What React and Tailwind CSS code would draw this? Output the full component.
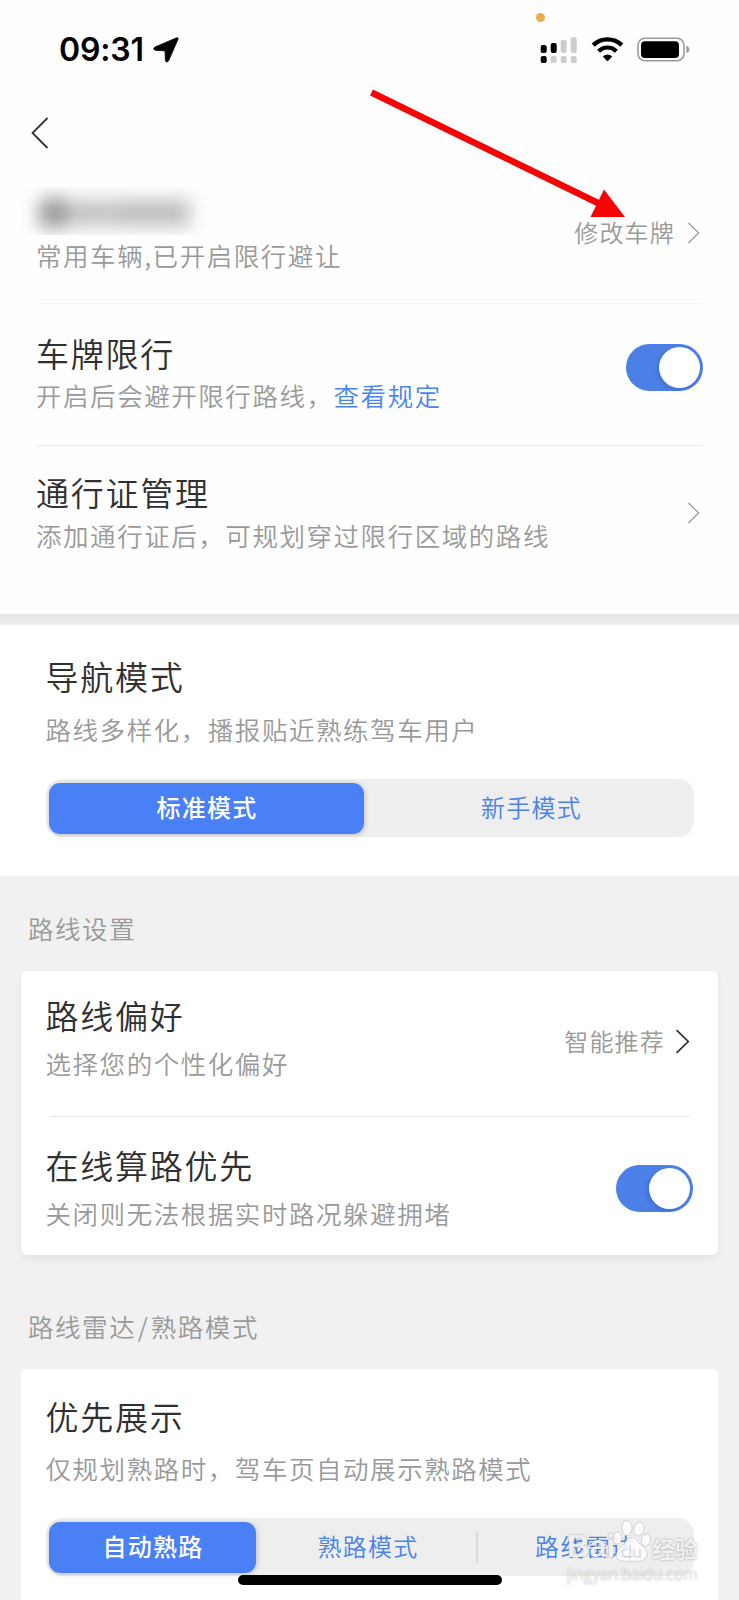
const TITLE = "text-[33px] leading-[40px] tracking-[1.75px] text-[#303030]";
const SUB = "text-[25.5px] leading-[32px] tracking-[1.55px] text-[#999]";
const SMALL = "text-[24px] leading-[32px] tracking-[1.2px]";

function Toggle({ className = "" }) {
  return (
    <div className={`flex h-[47px] w-[77px] items-center justify-end rounded-full bg-[#4c80e6] pr-[3px] ${className}`}>
      <div className="size-[41px] rounded-full bg-white shadow-[-2px_2px_4px_rgba(20,50,130,0.22)]" />
    </div>
  );
}

function Chevron({ className, width, height, stroke }) {
  return (
    <svg className={`shrink-0 ${className}`} width={width} height={height} viewBox="0 0 12 22" fill="none" preserveAspectRatio="none">
      <path d="M0.5 1 L10.5 11 L0.5 21" stroke="currentColor" strokeWidth={stroke} />
    </svg>
  );
}

function StatusBar() {
  return (
    <header className="relative flex h-[98px] items-center justify-between pl-[59px] pr-[49px] pt-[2px]">
      <div className="flex items-center">
        <span className="w-[85px] font-['Inter',sans-serif] text-[32px] font-semibold leading-[40px] tracking-[-0.15px] text-black">09:31</span>
        <svg className="-mt-px ml-[9px]" width="26" height="26" viewBox="0 0 26 26">
          <path d="M25 2.2 Q25.6 0.2 23.4 0.9 L2 10 Q-1 11.7 2 13.2 L11 13.8 Q12 13.9 12.1 14.8 L12.4 23.6 Q13.4 26.6 15.6 23.8 Z" fill="#000" stroke="#000" strokeWidth="0.8" />
        </svg>
      </div>
      <div className="-mt-px flex items-center">
        <svg width="38" height="28" viewBox="0 0 38 28">
          <rect x="0.7" y="9" width="6" height="8" rx="2" fill="#000" />
          <rect x="10.7" y="7" width="6" height="10" rx="2" fill="#000" />
          <rect x="20.7" y="4" width="6" height="13" rx="2" fill="#ccc" />
          <rect x="30.7" y="1" width="6" height="16" rx="2" fill="#ccc" />
          <rect x="0.7" y="20" width="6" height="7" rx="2" fill="#000" />
          <rect x="10.7" y="20" width="6" height="7" rx="2" fill="#ccc" />
          <rect x="20.7" y="20" width="6" height="7" rx="2" fill="#ccc" />
          <rect x="30.7" y="20" width="6" height="7" rx="2" fill="#ccc" />
        </svg>
        <svg className="ml-[13px]" width="33" height="25" viewBox="0 0 33 25">
          <path d="M2.2 8.2 A20.5 20.5 0 0 1 30.8 8.2" fill="none" stroke="#000" strokeWidth="4.4" />
          <path d="M7.6 14.2 A12.6 12.6 0 0 1 25.4 14.2" fill="none" stroke="#000" strokeWidth="4.2" />
          <path d="M11.8 19.4 Q16.5 15.6 21.2 19.4 L17.2 23.8 Q16.5 24.4 15.8 23.8 Z" fill="#000" />
        </svg>
        <svg className="ml-[13px]" width="53" height="26" viewBox="0 0 53 26">
          <rect x="1" y="1.2" width="46" height="22.6" rx="7" fill="none" stroke="#999" strokeWidth="1.6" />
          <rect x="4" y="4.2" width="38" height="16.8" rx="4" fill="#000" />
          <path d="M49.4 8.8 Q52.4 9.8 52.4 12.5 Q52.4 15.2 49.4 16.2 Z" fill="#999" />
        </svg>
      </div>
      <div className="absolute left-[536px] top-[13px] size-[9px] rounded-full bg-[#ecab4c]" />
    </header>
  );
}

function Segment({ children }) {
  return <div className="flex h-[58px] w-[648px] rounded-[16px] bg-[#eee] px-[3px] pt-[4px] text-[#4a82ea]">{children}</div>;
}

function Active({ children, className }) {
  return (
    <div className={`flex h-[51px] items-center justify-center rounded-[11px] bg-[#4a80f5] pb-[4px] pl-[2px] font-medium text-white shadow-[1px_1px_5px_rgba(0,0,0,0.2)] ${SMALL} ${className}`}>
      {children}
    </div>
  );
}

function Watermark() {
  return (
    <div className="absolute left-[567px] top-[1517px] h-[70px] w-[136px] text-white/85">
      <div className="flex h-[46px] items-end font-['Liberation_Sans',sans-serif] font-bold [text-shadow:0_0_2px_rgba(0,0,0,0.4)]">
        <span className="w-[45px] text-[31px] leading-[33px]">Bai</span>
        <svg width="40" height="44" viewBox="0 0 40 44">
          <g fill="currentColor" stroke="#000" strokeOpacity="0.14" strokeWidth="1">
            <ellipse cx="5.500" cy="19" rx="4.500" ry="6" />
            <ellipse cx="15" cy="9" rx="5" ry="7.500" />
            <ellipse cx="27" cy="10" rx="5" ry="7" transform="rotate(15 27 10)" />
            <ellipse cx="34" cy="21" rx="4.500" ry="6" transform="rotate(15 34 21)" />
            <path d="M19 19 Q24 18 27 24 Q36 30 35 37 Q33 44 20 42 Q6 44 4 37 Q4 31 11 26 Q15 19 19 19Z" />
          </g>
          <path d="M15 30 a4.500 4 0 1 0 0.100 8 h3 v-12 M22 30 v6 q0 2 3 2 h3 v-8" fill="none" stroke="#000" strokeOpacity="0.14" strokeWidth="1.500" />
        </svg>
        <span className="font-['Noto_Sans_CJK_SC',sans-serif] text-[23px] leading-[30px]">经验</span>
      </div>
      <div className="font-['Open_Sans',sans-serif] text-[15.500px] leading-[22px] tracking-[0.300px] [text-shadow:0_0_2px_rgba(0,0,0,0.45)]">jingyan.baidu.com</div>
    </div>
  );
}

export default function App() {
  return (
    <div className="relative h-[1600px] w-[739px] overflow-hidden bg-[#f1f1f1] font-['Noto_Sans_CJK_SC',sans-serif] font-[350] whitespace-nowrap">
      <div className="h-[614px] bg-[#fefefe]">
        <StatusBar />
        <nav className="h-[70px] pl-[31px] pt-[19px]">
          <svg width="18" height="32" viewBox="0 0 18 32" fill="none">
            <path d="M16.500 1 L1.500 16 L16.500 31" stroke="#333" strokeWidth="1.8" />
          </svg>
        </nav>
        <section className="flex h-[132px] justify-between border-b border-[#f9f9f9] pl-[36px] pr-[39px] pt-[19px]">
          <div>
            <div className="-ml-[20px] h-[48px] w-[220px] overflow-hidden">
              <div className="flex items-center gap-[1px] pl-[23px] pt-[11px] blur-[9px]">
                <div className="h-[30px] w-[29px] rounded-lg bg-[#969696]" />
                <div className="h-[26px] w-[45px] bg-[#c2c2c2]" />
                <div className="h-[26px] w-[75px] bg-[#bcbcbc]" />
              </div>
            </div>
            <div className={`mt-[4px] ${SUB}`}>常用车辆,已开启限行避让</div>
          </div>
          <div className="mt-[29px] flex h-[32px] items-center text-[#999]">
            <span className={SMALL}>修改车牌</span>
            <Chevron className="ml-[13px] mt-[2px]" width={12} height={22} stroke={1.2} />
          </div>
        </section>

        <section className="mx-[36px] mt-[3px] flex h-[143px] justify-between border-b border-t border-b-[#eee] border-t-[#f8f8f8]">
          <div className="pt-[29px]">
            <div className={TITLE}>车牌限行</div>
            <div className={`mt-[6px] ${SUB}`}>
              开启后会避开限行路线，<span className="text-[#4a85ea]">查看规定</span>
            </div>
          </div>
          <Toggle className="mt-[40px]" />
        </section>

        <section className="mx-[36px] flex justify-between pr-[3px]">
          <div className="pt-[26px]">
            <div className={TITLE}>通行证管理</div>
            <div className={`mt-[7px] ${SUB}`}>添加通行证后，可规划穿过限行区域的路线</div>
          </div>
          <Chevron className="mt-[56px] text-[#999]" width={12} height={22} stroke={1.2} />
        </section>
      </div>
      <div className="h-[11px] bg-linear-to-b from-[#e5e5e5] to-[#f0f0f0]" />

      <section className="h-[251px] bg-white pl-[45.5px] pt-[31px]">
        <div className={TITLE}>导航模式</div>
        <div className={`mt-[17px] ${SUB}`}>路线多样化，播报贴近熟练驾车用户</div>
        <div className="mt-[34px]">
          <Segment>
            <Active className="w-[315px]">标准模式</Active>
            <div className={`flex flex-1 items-center justify-center pb-[7px] pl-[9px] ${SMALL}`}>新手模式</div>
          </Segment>
        </div>
      </section>

      <div className={`pl-[28px] pt-[36px] ${SUB}`}>路线设置</div>
      <section className="mx-[21px] mt-[27px] h-[284px] rounded-[6px] bg-white pl-[24.5px] pr-[25px] shadow-[0_4px_8px_rgba(0,0,0,0.06)]">
        <div className="flex justify-between">
          <div className="pt-[24px]">
            <div className={TITLE}>路线偏好</div>
            <div className={`mt-[12px] ${SUB}`}>选择您的个性化偏好</div>
          </div>
          <div className="mt-[54px] flex h-[32px] items-center pr-[3px] text-[#999]">
            <span className={SMALL}>智能推荐</span>
            <Chevron className="ml-[11px] text-[#333]" width={14} height={25} stroke={1.5} />
          </div>
        </div>
        <div className="ml-[4px] mr-[3px] mt-[37px] h-px bg-[#e6e6e6]" />
        <div className="flex justify-between">
          <div className="pt-[28px]">
            <div className={TITLE}>在线算路优先</div>
            <div className={`mt-[12px] ${SUB}`}>关闭则无法根据实时路况躲避拥堵</div>
          </div>
          <Toggle className="mt-[48px]" />
        </div>
      </section>

      <div className={`pl-[28px] pt-[55px] ${SUB}`}>
        路线雷达<span className="px-[1.500px]">/</span>熟路模式
      </div>
      <section className="mx-[21px] mt-[27px] h-[260px] rounded-[6px] bg-white pl-[24.5px] pt-[27px]">
        <div className={TITLE}>优先展示</div>
        <div className={`mt-[16px] ${SUB}`}>仅规划熟路时，驾车页自动展示熟路模式</div>
        <div className="mt-[34px]">
          <Segment>
            <Active className="w-[207px]">自动熟路</Active>
            <div className={`flex w-[220px] items-center justify-center pb-[6px] pl-[5px] ${SMALL}`}>熟路模式</div>
            <div className="mt-[9px] h-[32px] w-[2px] bg-[#dcdcdc]" />
            <div className={`flex flex-1 items-center justify-center pb-[6px] pl-[3px] ${SMALL}`}>路线雷达</div>
          </Segment>
        </div>
      </section>

      <div className="absolute left-[238px] top-[1575px] h-[10px] w-[264px] rounded-full bg-black" />
      <Watermark />
      <svg className="absolute left-[360px] top-[80px]" width="280" height="145" viewBox="360 80 280 145">
        <path d="M371.5 92.5 L600 204" stroke="#f60303" strokeWidth="6.5" />
        <path d="M604 189.500 L625 217 L590.500 217 Z" fill="#f60303" />
      </svg>
    </div>
  );
}
